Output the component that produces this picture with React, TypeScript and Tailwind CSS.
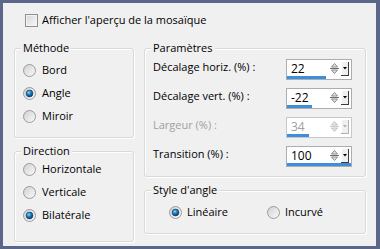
import React from "react";

const font = { fontFamily: '"Open Sans", "Noto Sans", sans-serif' };

function Radio({ checked }: { checked?: boolean }) {
  return (
    <svg width="13" height="13" viewBox="0 0 13 13" className="shrink-0">
      <defs>
        <linearGradient id="rbg" x1="0" y1="0" x2="1" y2="1">
          <stop offset="0" stopColor="#cfcfcf" />
          <stop offset="1" stopColor="#fbfbfb" />
        </linearGradient>
        <radialGradient id="rdot" cx="0.4" cy="0.35" r="0.7">
          <stop offset="0" stopColor="#8fd8f8" />
          <stop offset="0.45" stopColor="#1f7fbf" />
          <stop offset="1" stopColor="#0a2f58" />
        </radialGradient>
      </defs>
      <circle cx="6.5" cy="6.5" r="6" fill="url(#rbg)" stroke="#9a9b9b" strokeWidth="1" />
      {checked && <circle cx="6.5" cy="6.5" r="3.4" fill="url(#rdot)" stroke="#0e3b66" strokeWidth="0.6" />}
    </svg>
  );
}

function Option({ label, checked }: { label: string; checked?: boolean }) {
  return (
    <div className="flex items-center gap-[6px] h-[23px]">
      <Radio checked={checked} />
      <span>{label}</span>
    </div>
  );
}

function Group({ title, className, children }: { title: string; className: string; children: React.ReactNode }) {
  return (
    <div className={`relative border border-[#d9d9d9] rounded-[3px] shadow-[inset_1px_1px_0_#fff,1px_1px_0_#fff] ${className}`}>
      <span className="absolute -top-[9px] left-[6px] px-[2px] bg-[#f0f0f0] leading-[16px]">{title}</span>
      {children}
    </div>
  );
}

function Spinner({ disabled }: { disabled?: boolean }) {
  const c = disabled ? "#c4c4c4" : "#8a8a8a";
  return (
    <svg width="20" height="14" viewBox="0 0 20 14" className="shrink-0">
      <polygon points="1.5,5 4.5,1.5 7.5,5" fill="#e6e6e6" stroke={c} strokeWidth="1" />
      <line x1="0" y1="6.5" x2="9" y2="6.5" stroke={disabled ? "#c8c8c8" : "#6e6e6e"} strokeWidth="1" />
      <polygon points="1.5,8 4.5,11.5 7.5,8" fill="#e6e6e6" stroke={c} strokeWidth="1" />
      <rect x="11" y="0" width="8" height="13" fill="#f0f0f0" />
      <line x1="11.5" y1="0" x2="11.5" y2="13" stroke="#ffffff" />
      <line x1="18.5" y1="0" x2="18.5" y2="13.5" stroke={disabled ? "#b0b0b0" : "#3c3c3c"} />
      <line x1="11" y1="13.5" x2="19" y2="13.5" stroke={disabled ? "#b0b0b0" : "#3c3c3c"} />
      <polygon points="13,5 17,5 15,7.5" fill={disabled ? "#b0b0b0" : "#000"} />
    </svg>
  );
}

const rows = [
  { label: "Décalage horiz. (%) :", value: "22", pct: 61 },
  { label: "Décalage vert. (%) :", value: "-22", pct: 39 },
  { label: "Largeur (%) :", value: "34", pct: 34, disabled: true },
  { label: "Transition (%) :", value: "100", pct: 100 },
];

export default function App() {
  return (
    <div className="w-[380px] h-[249px] bg-[#5b6788] pt-[3px] pl-[3px] pr-[4px] pb-[3px] text-[11px] text-black" style={font}>
      <div className="h-full bg-[#f0f0f0] pl-[11px] pr-[10px] pt-[11px]">
        {/* Checkbox */}
        <div className="flex items-center gap-[4px] h-[13px] pl-[11px]">
          <div className="w-[13px] h-[13px] border border-[#8f8f8f] bg-gradient-to-br from-[#d8d8d8] to-[#f8f8f8] shadow-[inset_0_0_0_1px_#f4f4f4]" />
          <span>Afficher l'aperçu de la mosaïque</span>
        </div>

        <div className="flex gap-[10px] mt-[21px]">
          {/* Left column */}
          <div className="w-[120px] shrink-0 flex flex-col">
            <Group title="Méthode" className="h-[90px] pt-[10px] pl-[8px]">
              <Option label="Bord" />
              <Option label="Angle" checked />
              <Option label="Miroir" />
            </Group>
            <Group title="Direction" className="h-[91px] mt-[13px] pt-[6px] pl-[8px]">
              <Option label="Horizontale" />
              <Option label="Verticale" />
              <Option label="Bilatérale" checked />
            </Group>
          </div>

          {/* Right column */}
          <div className="w-[222px] flex flex-col">
            <Group title="Paramètres" className="h-[129px] pt-[10px] pl-[8px] flex flex-col gap-[8px]">
              {rows.map((r) => (
                <div key={r.label} className="flex items-center h-[21px]">
                  <span className={`w-[133px] -mt-[5px] ${r.disabled ? "text-[#a0a0a0]" : ""}`}>{r.label}</span>
                  <div className={`w-[66px] h-[21px] border bg-white flex flex-col ${r.disabled ? "border-[#c8c8c8]" : "border-[#abadb3]"}`}>
                    <div className="flex items-center h-[16px] pl-[4px] pr-[1px] pt-[2px]">
                      <span className={`flex-1 text-[12px] ${r.disabled ? "text-[#a0a0a0]" : ""}`}>{r.value}</span>
                      <Spinner disabled={r.disabled} />
                    </div>
                    <div className="h-[3px] bg-[#3e8fd8]" style={{ width: `${r.pct}%` }} />
                  </div>
                </div>
              ))}
            </Group>
            <Group title="Style d'angle" className="h-[44px] mt-[13px] pt-[14px] pl-[24px] flex items-start">
              <div className="flex items-center gap-[5px] w-[98px] h-[15px]">
                <Radio checked />
                <span>Linéaire</span>
              </div>
              <div className="flex items-center gap-[5px] h-[15px]">
                <Radio />
                <span>Incurvé</span>
              </div>
            </Group>
          </div>
        </div>
      </div>
    </div>
  );
}
